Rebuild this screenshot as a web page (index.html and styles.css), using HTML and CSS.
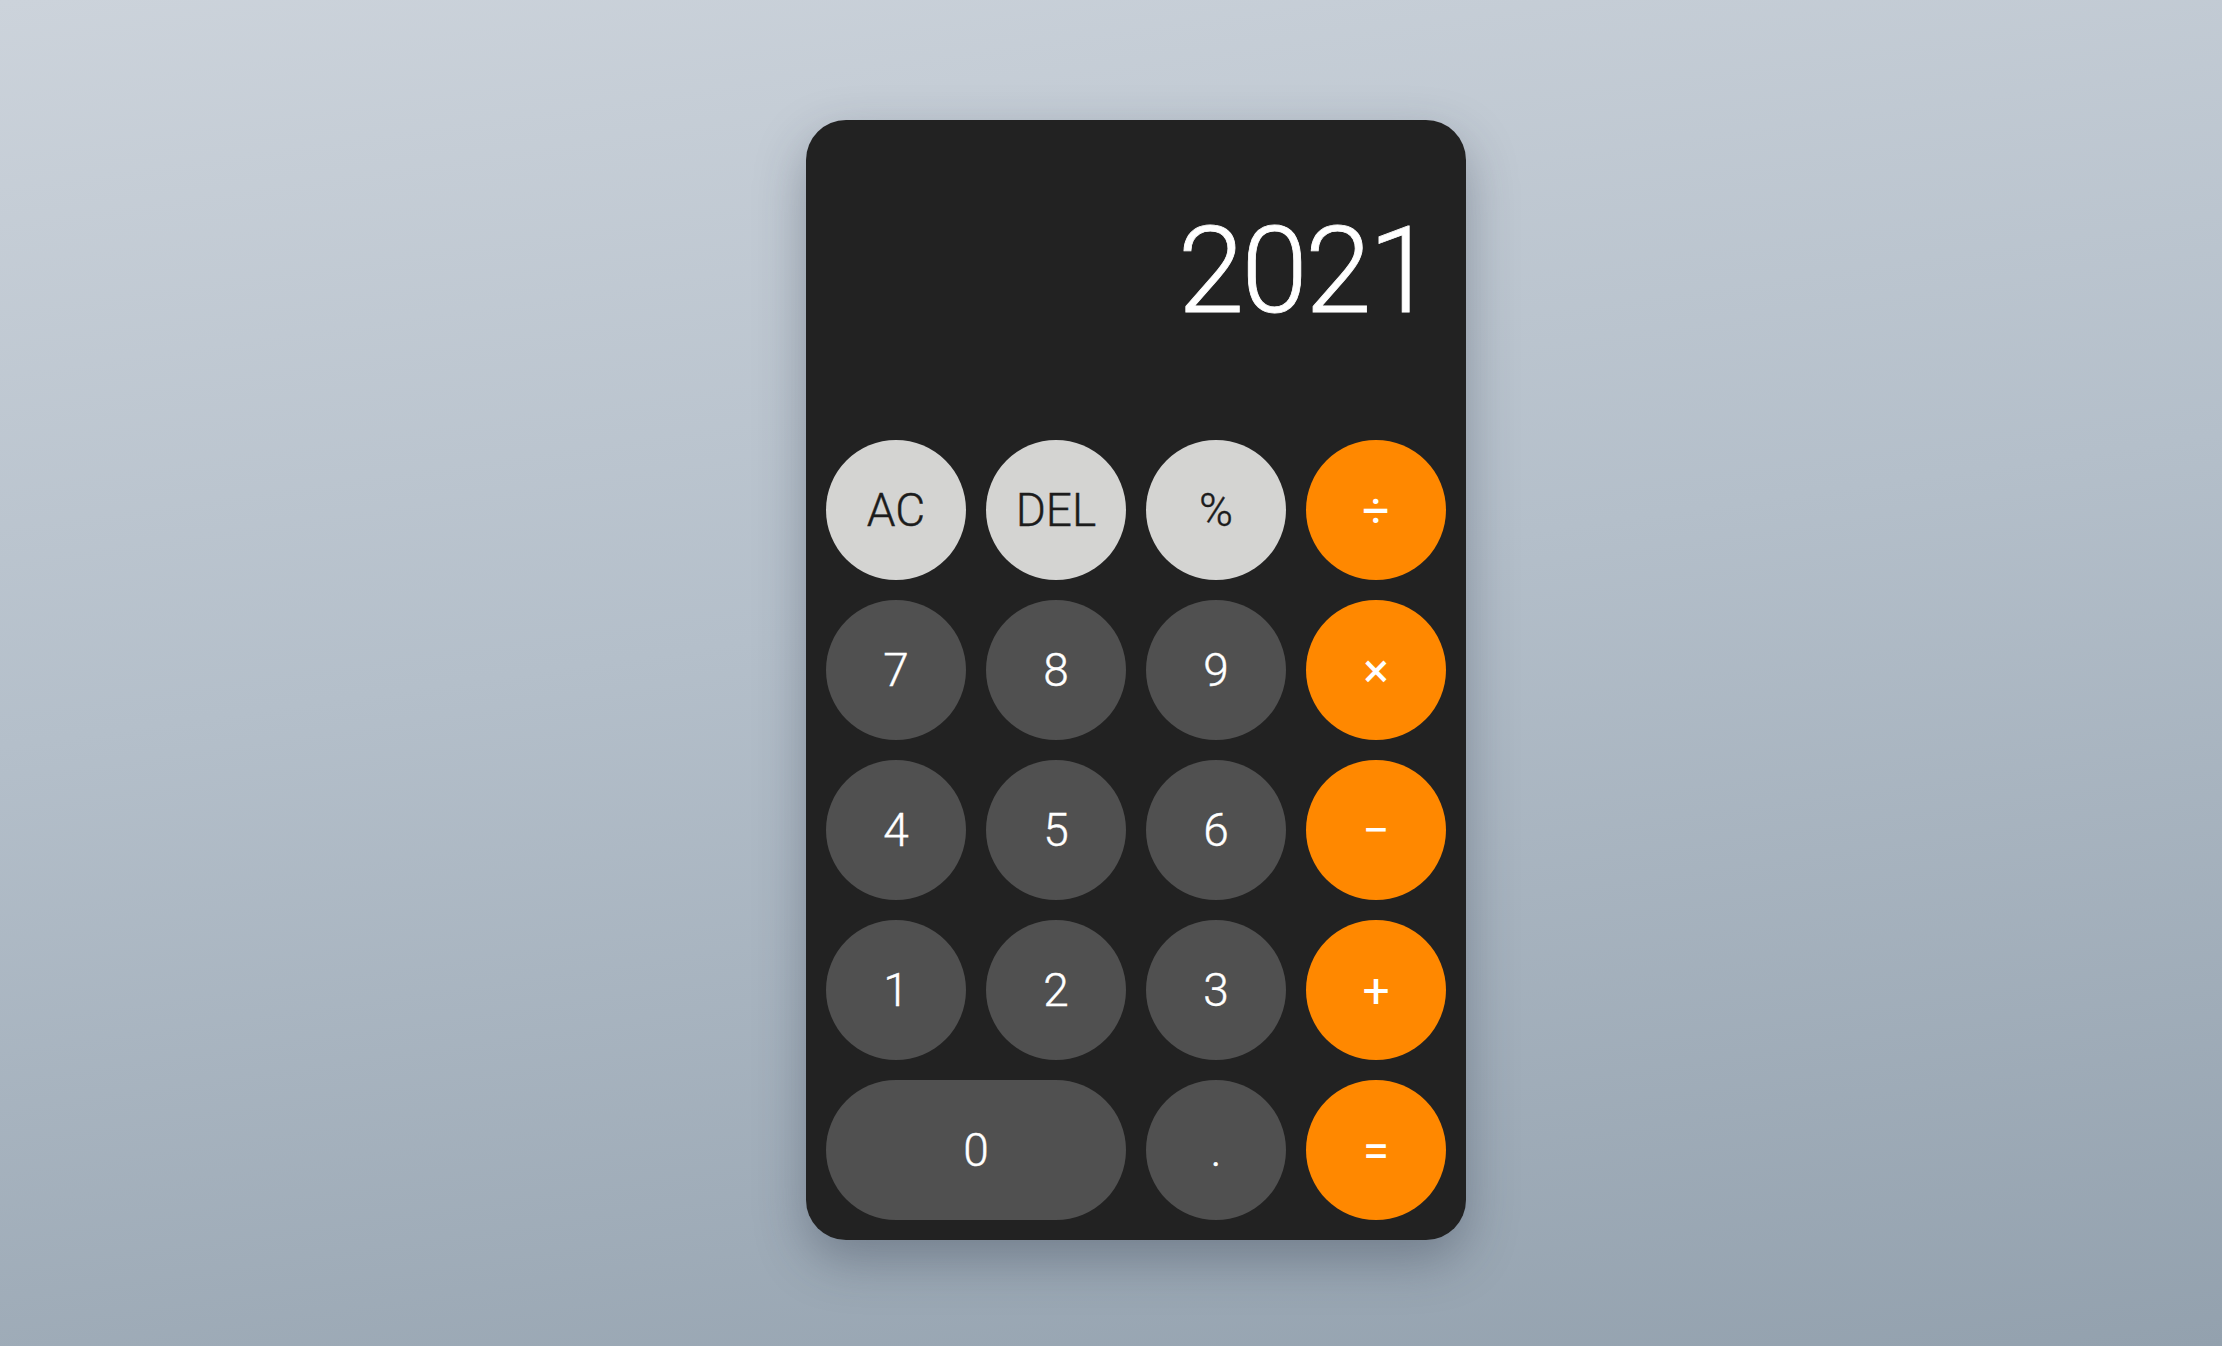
FILE: index.html
```html
<!DOCTYPE html>
<html lang="en">
<head>
<meta charset="utf-8">
<title>Calculator</title>
<link rel="stylesheet" href="styles.css">
</head>
<body>
<main class="page">
  <div class="calculator">
    <div class="display"><span class="value">2021</span></div>
    <div class="keys">
      <button class="key key-light">AC</button>
      <button class="key key-light">DEL</button>
      <button class="key key-light">%</button>
      <button class="key key-op">÷</button>
      <button class="key">7</button>
      <button class="key">8</button>
      <button class="key">9</button>
      <button class="key key-op">×</button>
      <button class="key">4</button>
      <button class="key">5</button>
      <button class="key">6</button>
      <button class="key key-op">−</button>
      <button class="key">1</button>
      <button class="key">2</button>
      <button class="key">3</button>
      <button class="key key-op">+</button>
      <button class="key key-zero">0</button>
      <button class="key">.</button>
      <button class="key key-op">=</button>
    </div>
  </div>
</main>
</body>
</html>
```

FILE: styles.css
```css
* {
  box-sizing: border-box;
}

html, body {
  margin: 0;
  padding: 0;
}

body {
  font-family: "Roboto", "Lato", "Noto Sans", sans-serif;
  background: linear-gradient(172deg, #ccd3db 0%, #b4bfca 45%, #93a1ae 100%);
  min-height: 100vh;
}

.page {
  min-height: 100vh;
  display: flex;
  justify-content: center;
  align-items: flex-start;
  padding: 120px 0 0 50px;
}

.calculator {
  width: 660px;
  background: #222222;
  border-radius: 40px;
  padding: 20px;
  display: flex;
  flex-direction: column;
  gap: 20px;
  box-shadow: 0 20px 50px rgba(40, 50, 65, 0.35);
}

.display {
  height: 280px;
  display: flex;
  justify-content: flex-end;
  align-items: flex-start;
  padding: 71px 14px 0 0;
}

.value {
  color: #ffffff;
  font-size: 120px;
  font-weight: 300;
  line-height: 1;
  letter-spacing: -3px;
  -webkit-text-stroke: 0.8px #ffffff;
}

.keys {
  display: grid;
  grid-template-columns: repeat(4, 140px);
  grid-auto-rows: 140px;
  gap: 20px;
}

.key {
  border: none;
  border-radius: 70px;
  background: #505050;
  color: #ffffff;
  font-family: inherit;
  font-size: 46px;
  font-weight: 300;
  -webkit-text-stroke: 0.4px currentColor;
  display: flex;
  align-items: center;
  justify-content: center;
  padding: 0;
  cursor: pointer;
}

.key-light {
  background: #d4d4d2;
  color: #1c1c1c;
}

.key-op {
  background: #ff8800;
  color: #ffffff;
  font-size: 48px;
  font-weight: 400;
  -webkit-text-stroke: 0;
}

.key-zero {
  grid-column: span 2;
}
```
